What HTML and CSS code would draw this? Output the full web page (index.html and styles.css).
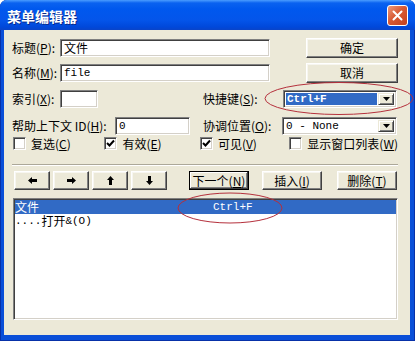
FILE: index.html
```html
<!DOCTYPE html>
<html lang="zh-CN">
  <head>
    <meta charset="UTF-8" />
    <title>菜单编辑器</title>
    <link rel="stylesheet" href="styles.css">
  </head>
  <body>
    <div class="window">
      <div class="titlebar">
        <span class="title">菜单编辑器</span>
        <span class="close">
          <svg width="11" height="11" viewBox="0 0 11 11"><path d="M1.5 1.5 L9.5 9.5 M9.5 1.5 L1.5 9.5" stroke="#fff" stroke-width="2" stroke-linecap="round" /></svg>
        </span>
      </div>

      <div class="client">
        <div class="row">
          <span class="lbl lbl-short">标题(<u>P</u>):</span>
          <div class="field field-wide">文件</div>
          <button class="btn btn-side">确定</button>
        </div>
        <div class="row row-2">
          <span class="lbl lbl-short">名称(<u>M</u>):</span>
          <div class="field field-wide mono">file</div>
          <button class="btn btn-side">取消</button>
        </div>
        <div class="row row-3">
          <span class="lbl lbl-short">索引(<u>X</u>):</span>
          <div class="field field-index"></div>
          <span class="lbl lbl-key">快捷键(<u>S</u>):</span>
          <div class="combo combo-key">
            <span class="combo-val"><span class="hl mono">Ctrl+F</span></span>
            <span class="drop"><svg width="7" height="4" viewBox="0 0 7 4"><path d="M0 0 H7 L3.5 4 Z" fill="#000" /></svg></span>
          </div>
        </div>
        <div class="row row-4">
          <span class="lbl lbl-help">帮助上下文 ID(<u>H</u>):</span>
          <div class="field field-help mono">0</div>
          <span class="lbl lbl-pos">协调位置(<u>O</u>):</span>
          <div class="combo combo-pos">
            <span class="combo-val mono">0 - None</span>
            <span class="drop"><svg width="7" height="4" viewBox="0 0 7 4"><path d="M0 0 H7 L3.5 4 Z" fill="#000" /></svg></span>
          </div>
        </div>
        <div class="row checks">
          <span class="chk chk-1"><span class="box"></span><span>复选(<u>C</u>)</span></span>
          <span class="chk chk-2"><span class="box"><svg width="9" height="9" viewBox="0 0 9 9"><path d="M1 4 L3.5 6.5 L8 1.5" fill="none" stroke="#000" stroke-width="2" /></svg></span><span>有效(<u>E</u>)</span></span>
          <span class="chk chk-3"><span class="box"><svg width="9" height="9" viewBox="0 0 9 9"><path d="M1 4 L3.5 6.5 L8 1.5" fill="none" stroke="#000" stroke-width="2" /></svg></span><span>可见(<u>V</u>)</span></span>
          <span class="chk"><span class="box"></span><span>显示窗口列表(<u>W</u>)</span></span>
        </div>

        <div class="sep"></div>

        <div class="row tools">
          <button class="btn btn-arrow"><svg width="9" height="7" viewBox="0 0 9 7"><path d="M0 3.5 L4 0 V2 H9 V5 H4 V7 Z" fill="#000" /></svg></button>
          <button class="btn btn-arrow"><svg width="9" height="7" viewBox="0 0 9 7"><path d="M9 3.5 L5 0 V2 H0 V5 H5 V7 Z" fill="#000" /></svg></button>
          <button class="btn btn-arrow"><svg width="7" height="9" viewBox="0 0 7 9"><path d="M3.5 0 L0 4 H2 V9 H5 V4 H7 Z" fill="#000" /></svg></button>
          <button class="btn btn-arrow"><svg width="7" height="9" viewBox="0 0 7 9"><path d="M3.5 9 L0 5 H2 V0 H5 V5 H7 Z" fill="#000" /></svg></button>
          <button class="btn btn-act btn-next">下一个(<u>N</u>)</button>
          <button class="btn btn-act btn-insert">插入(<u>I</u>)</button>
          <button class="btn btn-act btn-delete">删除(<u>T</u>)</button>
        </div>

        <div class="list">
          <div class="item sel"><span class="cap">文件</span><span class="mono">Ctrl+F</span></div>
          <div class="item"><span class="mono">....</span>打开<span class="mono">&amp;(O)</span></div>
        </div>
      </div>

      <!-- red marks drawn over the dialog -->
      <svg class="marks" width="415" height="341" viewBox="0 0 415 341">
        <ellipse cx="339" cy="98.5" rx="74" ry="16" fill="none" stroke="#b5303c" stroke-width="1" />
        <ellipse cx="230" cy="208" rx="52" ry="15" fill="none" stroke="#b5303c" stroke-width="1" />
      </svg>
    </div>
  </body>
</html>
```

FILE: styles.css
```css
body {
  margin: 0;
  background: #fff;
  font-family: "Noto Sans CJK SC", sans-serif;
  font-size: 12px;
  color: #000;
}
.window {
  position: relative;
  width: 415px;
  height: 341px;
  display: flex;
  flex-direction: column;
  background: #0a4fd8;
  border-radius: 7px 7px 0 0;
  box-shadow: inset 1px 0 #0831a8, inset -1px 0 #0831a8, inset 0 -1px #0831a8;
  overflow: hidden;
}
.titlebar {
  height: 30px;
  flex: none;
  display: flex;
  align-items: center;
  padding: 0 7px;
  background: linear-gradient(#4a9cff 0, #0a62f0 3px, #0058ee 9px, #0455ea 20px, #0048da 27px, #0a44c8 30px);
}
.title {
  flex: 1;
  color: #fff;
  font-weight: bold;
  font-size: 14px;
  line-height: 1;
  margin-top: 1px;
  text-shadow: 1px 1px #0a2a8a;
}
.close {
  width: 21px;
  height: 21px;
  box-sizing: border-box;
  border: 1px solid #fff;
  border-radius: 3px;
  background: linear-gradient(135deg, #eb9a7c, #d85a34 45%, #c5401d);
  display: flex;
  align-items: center;
  justify-content: center;
  margin-top: 1px;
}
.close svg {
  display: block;
}
.client {
  flex: 1;
  margin: 0 5px 6px 4px;
  background: #ece9d8;
  padding: 8px 12px 15px 8px;
  display: flex;
  flex-direction: column;
}
.row {
  display: flex;
  align-items: center;
  height: 20px;
  flex: none;
}
.row-2 {
  margin-top: 5px;
}
.row-3 {
  margin-top: 6px;
}
.row-4 {
  margin-top: 7px;
}
.lbl {
  white-space: nowrap;
  line-height: 1;
}
.lbl-short {
  width: 48px;
}
.lbl-help {
  width: 103px;
}
.lbl-key {
  width: 80px;
  margin-left: 105px;
}
.lbl-pos {
  width: 79px;
  margin-left: 13px;
}
u {
  text-underline-offset: 1px;
}
.mono {
  font-family: "Liberation Mono", monospace;
  font-size: 11px;
}
.field,
.combo,
.list,
.box {
  box-sizing: border-box;
  background: #fff;
  border: 1px solid;
  border-color: #808080 #fff #fff #808080;
  box-shadow: inset 1px 1px #404040, inset -1px -1px #d4d0c8;
}
.field {
  height: 18px;
  padding: 0 3px;
  display: flex;
  align-items: center;
  line-height: 1;
}
.field-wide {
  width: 210px;
}
.field-index {
  width: 38px;
}
.field-help {
  width: 75px;
}
.combo {
  height: 18px;
  display: flex;
  align-items: stretch;
  padding: 2px;
}
.combo-key {
  width: 114px;
}
.combo-pos {
  width: 115px;
}
.combo-val {
  flex: 1;
  display: flex;
  align-items: center;
  padding-left: 1px;
  line-height: 1;
}
.combo-key .combo-val {
  padding: 0 1px 0 0;
}
.hl {
  flex: 1;
  align-self: stretch;
  display: flex;
  align-items: center;
  background: #316ac5;
  color: #fff;
  font-weight: bold;
  padding-left: 1px;
}
.drop {
  width: 16px;
  box-sizing: border-box;
  background: #ece9d8;
  border: 1px solid;
  border-color: #ece9d8 #404040 #404040 #ece9d8;
  box-shadow: inset 1px 1px #fff, inset -1px -1px #808080;
  display: flex;
  align-items: center;
  justify-content: center;
}
.btn {
  box-sizing: border-box;
  height: 20px;
  padding: 0;
  margin: 0;
  font: inherit;
  color: #000;
  line-height: 1;
  background: #ece9d8;
  border: 1px solid;
  border-color: #fff #404040 #404040 #fff;
  box-shadow: inset -1px -1px #808080, inset 1px 1px #f7f6f0;
  display: flex;
  align-items: center;
  justify-content: center;
}
.btn-side {
  width: 92px;
  margin-left: auto;
}
.checks {
  height: 13px;
  margin-top: 1px;
}
.chk {
  display: flex;
  align-items: center;
  gap: 5px;
  line-height: 1;
  white-space: nowrap;
}
.chk-1 {
  width: 92px;
  margin-left: 1px;
}
.chk-2 {
  width: 96px;
}
.chk-3 {
  width: 90px;
}
.box {
  width: 13px;
  height: 13px;
  display: flex;
  align-items: center;
  justify-content: center;
}
.box svg {
  display: block;
}
.sep {
  flex: none;
  height: 0;
  margin-top: 14px;
  border-top: 1px solid #aca899;
  border-bottom: 1px solid #fff;
}
.tools {
  height: 19px;
  margin-top: 5px;
  padding-left: 2px;
  gap: 3px;
}
.btn-arrow {
  width: 36px;
  height: 19px;
}
.btn-act {
  width: 60px;
  height: 19px;
}
.btn-next {
  margin-left: 19px;
  border-color: #000;
  box-shadow: inset -1px -1px #404040, inset 1px 1px #fff, inset -2px -2px #808080;
}
.btn-insert {
  margin-left: 10px;
}
.btn-delete {
  margin-left: 12px;
}
.list {
  flex: 1;
  width: 385px;
  margin-top: 8px;
  margin-left: 1px;
  padding: 1px;
}
.item {
  height: 14px;
  display: flex;
  align-items: center;
  line-height: 1;
  white-space: pre;
}
.item.sel {
  background: #316ac5;
  color: #fff;
}
.cap {
  width: 198px;
}
.marks {
  position: absolute;
  left: 0;
  top: 0;
  pointer-events: none;
}
```
